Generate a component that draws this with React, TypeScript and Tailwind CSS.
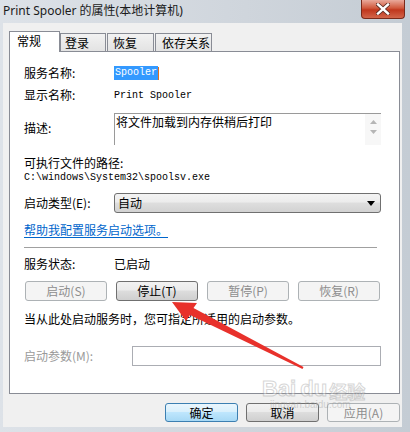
import React from "react";

const cjk = { fontFamily: '"Noto Sans CJK SC", "Noto Sans", sans-serif' };
const mono = { fontFamily: '"Liberation Mono", "DejaVu Sans Mono", monospace' };

function PanelButton({ label, enabled }: { label: string; enabled?: boolean }) {
  return enabled ? (
    <div className="w-[82px] h-[20px] flex items-center justify-center rounded-[3px] border border-[#707070] bg-[linear-gradient(#f2f2f2,#ebebeb_45%,#dddddd_50%,#cfcfcf)] text-[12px] text-black leading-none">
      {label}
    </div>
  ) : (
    <div className="w-[82px] h-[20px] flex items-center justify-center rounded-[3px] border border-[#adb2b5] bg-[#f4f4f4] text-[12px] text-[#8d8d8d] leading-none">
      {label}
    </div>
  );
}

export default function App() {
  return (
    <div className="relative w-[410px] h-[432px] overflow-hidden bg-[linear-gradient(90deg,#dde2e8,#cfd5dc_60%,#c4ccd4)] flex flex-col" style={cjk}>
      {/* Title bar */}
      <div className="h-[23px] flex items-start justify-between">
        <div className="pl-[3px] pt-[3px] text-[12px] leading-[16px] text-[#1b1b1b]" style={{ fontFamily: '"Noto Sans", "Noto Sans CJK SC", sans-serif' }}>
          Print Spooler 的属性(本地计算机)
        </div>
        <div className="mr-[5px] w-[44px] h-[19px] rounded-b-[4px] border border-t-0 border-[#7a2a1a] bg-[linear-gradient(#e9a99b,#d0583c_45%,#c0371d_55%,#d2654a)] flex items-center justify-center">
          <svg width="14" height="12" viewBox="0 0 14 12">
            <path d="M2 1.5 L12 10.5 M12 1.5 L2 10.5" stroke="#5a2a22" strokeWidth="4" strokeLinecap="square" />
            <path d="M2 1.5 L12 10.5 M12 1.5 L2 10.5" stroke="#ffffff" strokeWidth="2.4" strokeLinecap="square" />
          </svg>
        </div>
      </div>

      {/* Client area */}
      <div className="ml-[3px] w-[399px] h-[404px] bg-[#f0f0f0] pt-[8px] pl-[6px] pr-[2px] flex flex-col">
        {/* Tabs */}
        <div className="h-[20px] flex items-end text-[12px] leading-none text-black">
          <div className="relative z-10 w-[51px] h-[21px] -mb-px bg-white border border-b-0 border-[#898c95] pl-[7px] pt-[3px]">常规</div>
          <div className="w-[46px] h-[18px] border border-b-0 border-[#898c95] bg-[linear-gradient(#f2f2f2,#e3e3e3)] pl-[4px] pt-[3px]">登录</div>
          <div className="ml-px w-[47px] h-[18px] border border-b-0 border-[#898c95] bg-[linear-gradient(#f2f2f2,#e3e3e3)] pl-[5px] pt-[3px]">恢复</div>
          <div className="ml-px w-[57px] h-[18px] border border-b-0 border-[#898c95] bg-[linear-gradient(#f2f2f2,#e3e3e3)] pl-[6px] pt-[3px]">依存关系</div>
        </div>

        {/* Tab panel */}
        <div className="w-[391px] h-[343px] bg-white border border-[#898c95] pl-[14px] flex flex-col text-[12px] text-black">
          <div className="mt-[13px] h-[16px] flex items-center">
            <div className="w-[90px]">服务名称:</div>
            <div className="flex items-center h-[14px]">
              <span className="bg-[#3399ff] text-white text-[10px] leading-[14px] px-px" style={mono}>Spooler</span>
              <span className="w-px h-[13px] bg-[#e07020]" />
            </div>
          </div>
          <div className="mt-[6px] h-[16px] flex items-center">
            <div className="w-[90px]">显示名称:</div>
            <div className="text-[10px]" style={mono}>Print Spooler</div>
          </div>
          <div className="mt-[10px] h-[32px] flex">
            <div className="w-[90px] pt-[6px]">描述:</div>
            <div className="w-[267px] h-[32px] border-t border-l border-[#9a9a9a] flex">
              <div className="flex-1 pl-px leading-[15px]">将文件加载到内存供稍后打印</div>
              <div className="w-[16px] bg-[#f7f7f7] flex flex-col items-center pt-[6px] gap-[6px]">
                <svg width="7" height="4" viewBox="0 0 7 4"><path d="M0 4 L3.5 0 L7 4 Z" fill="#b5b5b5" /></svg>
                <svg width="7" height="4" viewBox="0 0 7 4"><path d="M0 0 L3.5 4 L7 0 Z" fill="#b5b5b5" /></svg>
              </div>
            </div>
          </div>
          <div className="mt-[10px] h-[15px] flex items-center">可执行文件的路径:</div>
          <div className="h-[15px] flex items-center text-[10px]" style={mono}>C:\windows\System32\spoolsv.exe</div>
          <div className="mt-[8px] h-[20px] flex items-center">
            <div className="w-[90px]">启动类型(E):</div>
            <div className="w-[267px] h-[20px] rounded-[3px] border border-[#707070] bg-[linear-gradient(#f3f3f3,#ececec_45%,#dedede_50%,#d2d2d2)] flex items-center justify-between pl-[3px] pr-[5px]">
              <span>自动</span>
              <svg width="8" height="5" viewBox="0 0 8 5"><path d="M0 0 L8 0 L4 5 Z" fill="#000" /></svg>
            </div>
          </div>
          <div className="mt-[9px] h-[16px] flex items-center">
            <span className="text-[#0066cc] underline underline-offset-2">帮助我配置服务启动选项。</span>
          </div>
          <div className="mt-[9px] w-[353px] h-px bg-[#a0a0a0]" />
          <div className="mt-[8px] h-[16px] flex items-center">
            <div className="w-[90px]">服务状态:</div>
            <div>已启动</div>
          </div>
          <div className="mt-[9px] ml-px flex gap-[9px]">
            <PanelButton label="启动(S)" />
            <PanelButton label="停止(T)" enabled />
            <PanelButton label="暂停(P)" />
            <PanelButton label="恢复(R)" />
          </div>
          <div className="mt-[10px] h-[16px] flex items-center">当从此处启动服务时，您可指定所适用的启动参数。</div>
          <div className="mt-[19px] h-[20px] flex items-center">
            <div className="w-[108px] text-[#9a9a9a]">启动参数(M):</div>
            <div className="w-[249px] h-[20px] border border-[#abadb3] bg-white" />
          </div>
        </div>

        {/* Bottom buttons */}
        <div className="mt-[9px] pl-[156px] flex gap-[8px] text-[12px]">
          <div className="w-[73px] h-[19px] rounded-[3px] border border-[#3c7fb1] bg-[linear-gradient(#eaf6fd,#d9f0fc_45%,#bee6fd_50%,#a7d9f5)] flex items-center justify-center">确定</div>
          <div className="w-[73px] h-[19px] rounded-[3px] border border-[#707070] bg-[linear-gradient(#f2f2f2,#ebebeb_45%,#dddddd_50%,#cfcfcf)] flex items-center justify-center">取消</div>
          <div className="w-[73px] h-[19px] rounded-[3px] border border-[#adb2b5] bg-[#f4f4f4] text-[#8d8d8d] flex items-center justify-center">应用(A)</div>
        </div>
      </div>

      {/* Watermark */}
      <div className="absolute left-[262px] top-[378px] flex flex-col items-start pointer-events-none opacity-40">
        <div className="flex items-end text-[22px] leading-none font-bold text-white [-webkit-text-stroke:1px_#9a9a9a]" style={{ fontFamily: '"Liberation Sans", sans-serif' }}>
          <span>Bai</span>
          <span className="ml-[4px]">du</span>
          <span className="ml-[2px] text-[18px]" style={cjk}>经验</span>
        </div>
        <div className="text-[10px] leading-none text-[#9a9a9a] ml-[8px]" style={{ fontFamily: '"Liberation Sans", sans-serif' }}>jingyan.baidu.com</div>
      </div>

      {/* Red arrow */}
      <svg className="absolute left-0 top-0 pointer-events-none" width="410" height="432" viewBox="0 0 410 432">
        <polygon
          points="172,302 197,303 193.5,308 303.5,367 302.5,369 190,315 186,321"
          fill="#e8312b"
        />
      </svg>
    </div>
  );
}
